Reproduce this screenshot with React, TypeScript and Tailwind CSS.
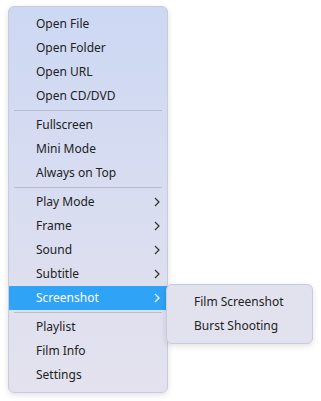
const groups: { label: string; sub?: boolean; active?: boolean }[][] = [
  [{ label: "Open File" }, { label: "Open Folder" }, { label: "Open URL" }, { label: "Open CD/DVD" }],
  [{ label: "Fullscreen" }, { label: "Mini Mode" }, { label: "Always on Top" }],
  [
    { label: "Play Mode", sub: true },
    { label: "Frame", sub: true },
    { label: "Sound", sub: true },
    { label: "Subtitle", sub: true },
    { label: "Screenshot", sub: true, active: true },
  ],
  [{ label: "Playlist" }, { label: "Film Info" }, { label: "Settings" }],
];

const Chevron = ({ white }: { white?: boolean }) => (
  <svg width="6" height="10" viewBox="0 0 6 10" className="shrink-0">
    <path d="M1 1l4 4-4 4" fill="none" stroke={white ? "#ffffff" : "#333333"} strokeWidth="1.2" />
  </svg>
);

const App = () => {
  return (
    <div className="w-[321px] h-[401px] bg-white font-['Noto_Sans',sans-serif] text-[12px] text-[#222] relative">
      <div className="absolute left-[8px] top-[6px] w-[160px] rounded-[6px] border border-[#c8cbd8] bg-gradient-to-b from-[#cdd8f3] to-[#e4e2ee] shadow-[0_2px_6px_rgba(0,0,0,0.12)] py-[5px]">
        {groups.map((group, gi) => (
          <div key={gi}>
            {gi > 0 && (
              <div className="h-[5px] flex items-center px-[5px]">
                <div className="h-px w-full bg-[#b6bdd0]" />
              </div>
            )}
            {group.map((item) => (
              <div
                key={item.label}
                className={`h-[24px] flex items-center justify-between pl-[27px] pr-[7px] ${
                  item.active ? "bg-[#2fa3f6] text-white" : ""
                }`}
              >
                <span>{item.label}</span>
                {item.sub && <Chevron white={item.active} />}
              </div>
            ))}
          </div>
        ))}
      </div>
      <div className="absolute left-[166px] top-[284px] w-[147px] rounded-[6px] border border-[#c8cbd8] bg-[#e2e2ef] shadow-[0_2px_6px_rgba(0,0,0,0.12)] py-[5px]">
        {["Film Screenshot", "Burst Shooting"].map((s) => (
          <div key={s} className="h-[24px] flex items-center pl-[27px]">
            {s}
          </div>
        ))}
      </div>
    </div>
  );
};

export default App;
